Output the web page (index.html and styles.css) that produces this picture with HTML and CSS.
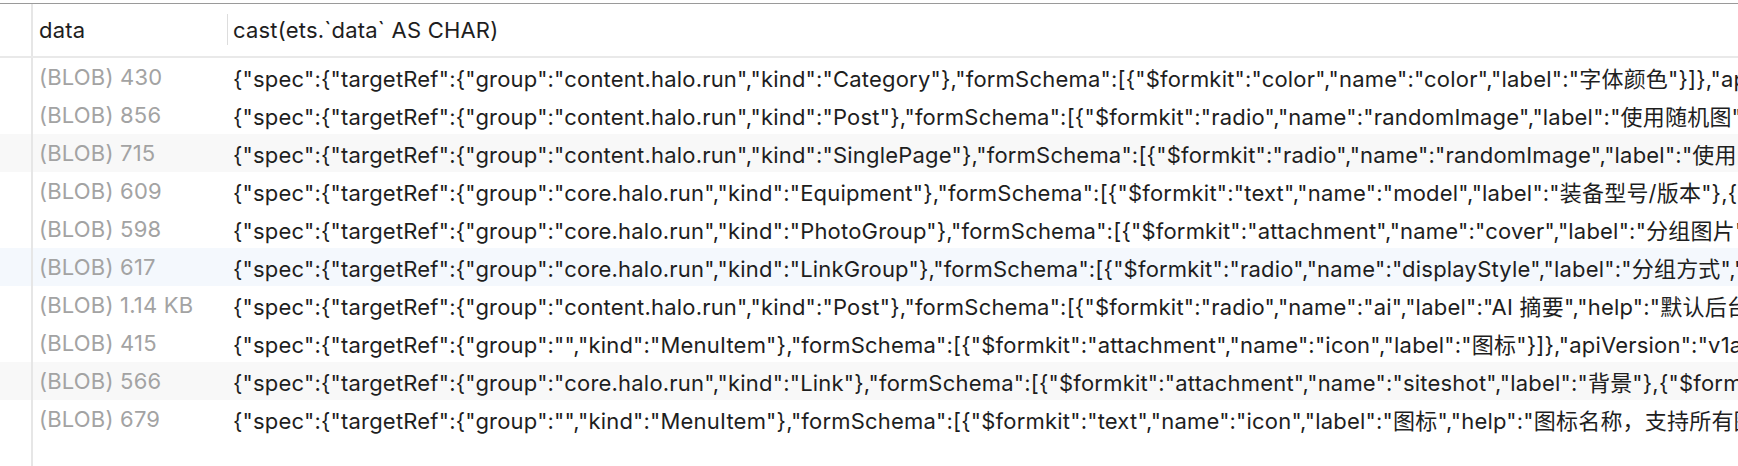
FILE: index.html
```html
<!DOCTYPE html>
<html lang="zh">
<head>
<meta charset="utf-8">
<title>Result</title>
<link rel="stylesheet" href="styles.css">
</head>
<body>
<div class="grid">
  <div class="row head">
    <div class="gutter"></div>
    <div class="cell c1">data</div>
    <div class="cell c2"><span class="sep"></span>cast(ets.`data` AS CHAR)</div>
  </div>
  <div class="row">
    <div class="gutter"></div>
    <div class="cell c1 blob">(BLOB) 430</div>
    <div class="cell c2">{"spec":{"targetRef":{"group":"content.halo.run","kind":"Category"},"formSchema":[{"$formkit":"color","name":"color","label":"字体颜色"}]},"apiVersion":"v1alpha1"}</div>
  </div>
  <div class="row">
    <div class="gutter"></div>
    <div class="cell c1 blob">(BLOB) 856</div>
    <div class="cell c2">{"spec":{"targetRef":{"group":"content.halo.run","kind":"Post"},"formSchema":[{"$formkit":"radio","name":"randomImage","label":"使用随机图","value":"false"}]}}</div>
  </div>
  <div class="row stripe">
    <div class="gutter"></div>
    <div class="cell c1 blob">(BLOB) 715</div>
    <div class="cell c2">{"spec":{"targetRef":{"group":"content.halo.run","kind":"SinglePage"},"formSchema":[{"$formkit":"radio","name":"randomImage","label":"使用随机图"}]}}</div>
  </div>
  <div class="row">
    <div class="gutter"></div>
    <div class="cell c1 blob">(BLOB) 609</div>
    <div class="cell c2">{"spec":{"targetRef":{"group":"core.halo.run","kind":"Equipment"},"formSchema":[{"$formkit":"text","name":"model","label":"装备型号/版本"},{"$formkit":"text"}]}}</div>
  </div>
  <div class="row">
    <div class="gutter"></div>
    <div class="cell c1 blob">(BLOB) 598</div>
    <div class="cell c2">{"spec":{"targetRef":{"group":"core.halo.run","kind":"PhotoGroup"},"formSchema":[{"$formkit":"attachment","name":"cover","label":"分组图片"}]}}</div>
  </div>
  <div class="row selected">
    <div class="gutter"></div>
    <div class="cell c1 blob">(BLOB) 617</div>
    <div class="cell c2">{"spec":{"targetRef":{"group":"core.halo.run","kind":"LinkGroup"},"formSchema":[{"$formkit":"radio","name":"displayStyle","label":"分组方式","value":"list"}]}}</div>
  </div>
  <div class="row">
    <div class="gutter"></div>
    <div class="cell c1 blob">(BLOB) 1.14 KB</div>
    <div class="cell c2">{"spec":{"targetRef":{"group":"content.halo.run","kind":"Post"},"formSchema":[{"$formkit":"radio","name":"ai","label":"AI 摘要","help":"默认后台设置"}]}}</div>
  </div>
  <div class="row">
    <div class="gutter"></div>
    <div class="cell c1 blob">(BLOB) 415</div>
    <div class="cell c2">{"spec":{"targetRef":{"group":"","kind":"MenuItem"},"formSchema":[{"$formkit":"attachment","name":"icon","label":"图标"}]},"apiVersion":"v1alpha1"}</div>
  </div>
  <div class="row stripe">
    <div class="gutter"></div>
    <div class="cell c1 blob">(BLOB) 566</div>
    <div class="cell c2">{"spec":{"targetRef":{"group":"core.halo.run","kind":"Link"},"formSchema":[{"$formkit":"attachment","name":"siteshot","label":"背景"},{"$formkit":"text"}]}}</div>
  </div>
  <div class="row">
    <div class="gutter"></div>
    <div class="cell c1 blob">(BLOB) 679</div>
    <div class="cell c2">{"spec":{"targetRef":{"group":"","kind":"MenuItem"},"formSchema":[{"$formkit":"text","name":"icon","label":"图标","help":"图标名称，支持所有图标"}]}}</div>
  </div>
  <div class="row filler">
    <div class="gutter"></div>
    <div class="cell c1"></div>
    <div class="cell c2"></div>
  </div>
</div>
</body>
</html>
```

FILE: styles.css
```css
html, body {
  margin: 0;
  padding: 0;
  background: #ffffff;
  height: 100%;
  overflow: hidden;
}

body {
  padding-top: 3px;
  box-sizing: border-box;
  font-family: Inter, "Noto Sans CJK SC", sans-serif;
  font-size: 22px;
  letter-spacing: 0.2px;
  color: #1e1e1e;
}

.grid {
  display: flex;
  flex-direction: column;
  height: 100%;
  border-top: 1px solid #9a9a9a;
}

.row {
  display: grid;
  grid-template-columns: 33px 194px 1fr;
  height: 38px;
  align-items: stretch;
}

.row.head {
  height: 52px;
  border-bottom: 2px solid #e9e9e9;
}

.row.stripe {
  background: #f8f8f8;
}

.row.selected {
  background: #f4f8fd;
}

.row.filler {
  flex: 1;
}

.gutter {
  border-right: 2px solid #e6e6e6;
}

.cell {
  display: flex;
  align-items: center;
  white-space: nowrap;
  overflow: hidden;
}

.c1 {
  padding-left: 6px;
}

.c2 {
  padding-left: 6px;
  position: relative;
}

.head .cell {
  color: #1e1e1e;
}

.sep {
  position: absolute;
  left: 0;
  top: 10px;
  bottom: 11px;
  width: 1px;
  background: #dddddd;
}

.blob {
  color: #a3a3a3;
}
```
